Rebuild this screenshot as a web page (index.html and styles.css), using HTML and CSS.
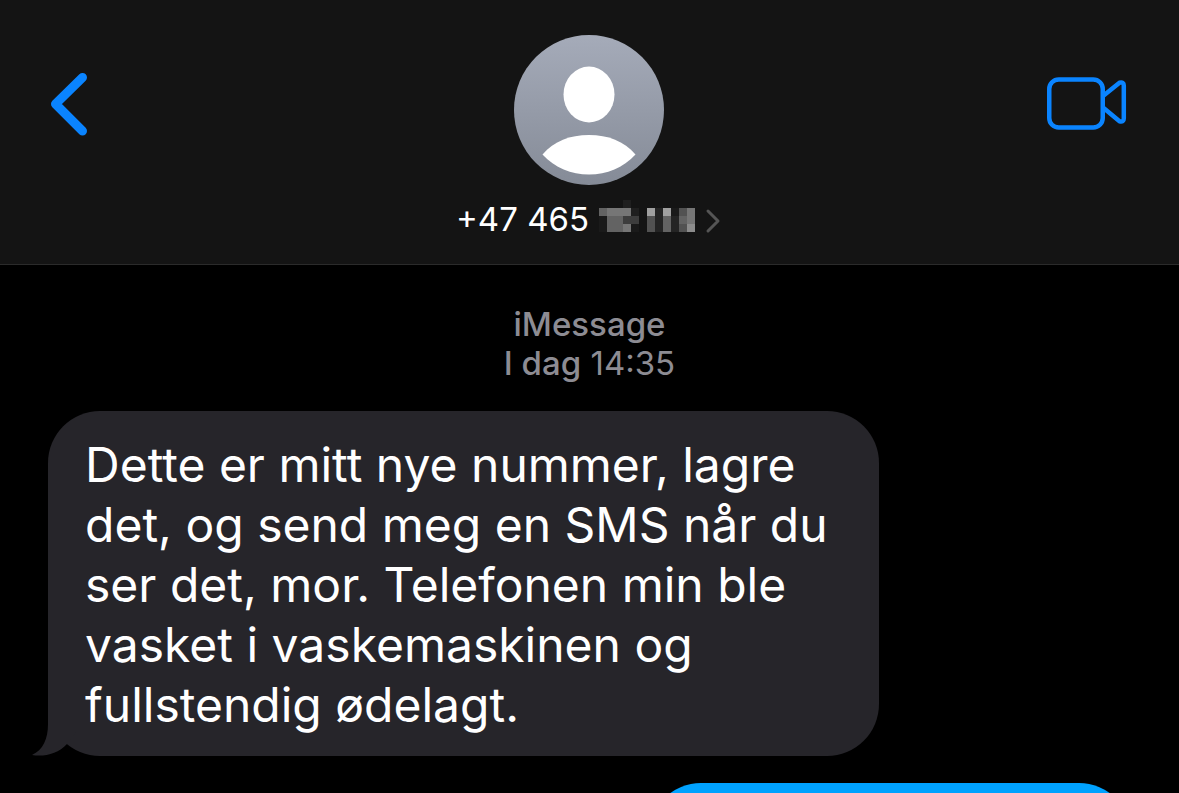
FILE: index.html
```html
<!DOCTYPE html>
<html lang="no">
<head>
    <meta charset="UTF-8">
    <meta name="viewport" content="width=device-width, initial-scale=1.0">
    <title>iMessage</title>
    <link rel="stylesheet" href="styles.css">
</head>
<body>
    <header class="topbar">
        <button class="icon-button" type="button" aria-label="Tilbake">
            <svg width="38" height="64" viewBox="0 0 38 64" fill="none" stroke="#0a84ff" stroke-width="9" stroke-linecap="round" stroke-linejoin="round">
                <path d="M32.500 5.500L5.500 32L32.500 59"/>
            </svg>
        </button>

        <div class="contact">
            <svg width="150" height="150" viewBox="0 0 150 150">
                <defs>
                    <linearGradient id="avatar" x1="0" y1="0" x2="0" y2="1">
                        <stop offset="0" stop-color="#a5abb9"/>
                        <stop offset="1" stop-color="#858b97"/>
                    </linearGradient>
                </defs>
                <circle cx="75" cy="75" r="75" fill="url(#avatar)"/>
                <ellipse cx="75" cy="59.500" rx="25.500" ry="28" fill="#fff"/>
                <path d="M28.500 119.500C40 106 56 100 75 100S110 106 121.500 119.500C109 133 93 139.500 75 139.500S41 133 28.500 119.500Z" fill="#fff"/>
            </svg>
            <a class="number" href="#">
                <span>+47 465</span>
                <svg class="hidden-digits" width="96" height="32" viewBox="0 0 12 4" shape-rendering="crispEdges" aria-hidden="true">
                    <g fill="#1f1f1f"><path d="M3 0h1v1h-1zM4 1h1v1h-1z"/></g>
                    <g fill="#1a1a1a"><path d="M0 2h1v2h-1zM4 3h1v1h-1zM9 1h1v1h-1z"/></g>
                    <g fill="#242424"><path d="M7 1h1v3h-1zM9 2h1v2h-1z"/></g>
                    <g fill="#3d3d3d"><path d="M3 2h2v1h-2z"/></g>
                    <g fill="#525252"><path d="M6 2h1v2h-1zM10 1h1v1h-1zM10 3h1v1h-1z"/></g>
                    <g fill="#636363"><path d="M0 1h1v1h-1zM1 2h2v2h-2zM8 2h1v2h-1zM10 2h1v1h-1z"/></g>
                    <g fill="#767676"><path d="M1 1h3v1h-3zM3 2h0v1h-0zM3 3h1v1h-1zM11 1h1v2h-1z"/></g>
                    <g fill="#8c8c8c"><path d="M11 3h1v1h-1z"/></g>
                    <g fill="#a0a0a0"><path d="M6 1h1v1h-1zM8 1h1v1h-1z"/></g>
                </svg>
                <svg class="chevron" width="16" height="26" viewBox="0 0 16 26" fill="none" stroke="#555" stroke-width="3" stroke-linecap="round" stroke-linejoin="round">
                    <path d="M3 3L13 13L3 23"/>
                </svg>
            </a>
        </div>

        <button class="icon-button" type="button" aria-label="Videosamtale">
            <svg width="80" height="54" viewBox="0 0 80 54" fill="none" stroke="#0a84ff" stroke-width="4.500" stroke-linejoin="round">
                <rect x="2.250" y="2.500" width="53.500" height="48" rx="9.500"/>
                <path d="M56 19L72.500 5.700Q76.800 4.500 76.800 8.500V41.500Q76.800 45.500 72.500 44.300L56 30.500"/>
            </svg>
        </button>
    </header>

    <main class="thread">
        <p class="stamp"><b>iMessage</b><br><b>I dag</b> 14:35</p>
        <div class="bubble received">
            Dette er mitt nye nummer, lagre<br>
            det, og send meg en SMS når du<br>
            ser det, mor. Telefonen min ble<br>
            vasket i vaskemaskinen og<br>
            fullstendig ødelagt.
            <svg class="tail" width="44" height="60" viewBox="0 0 44 60" fill="#26252a">
                <path d="M16 0V28C16 43 11 54 0 59C12 61 26 58 35 48L44 36V0Z"/>
            </svg>
        </div>
        <div class="bubble sent"></div>
    </main>
</body>
</html>
```
FILE: styles.css
```css
* { box-sizing: border-box; }
body {
    margin: 0;
    height: 100vh;
    overflow: hidden;
    background: #000;
    color: #fff;
    font-family: Inter, "Liberation Sans", sans-serif;
}
svg { display: block; }

.topbar {
    display: flex;
    justify-content: space-between;
    align-items: flex-start;
    padding: 35px 52px 20px 50px;
    background: #141414;
    border-bottom: 1px solid #2b2b2b;
}
.icon-button {
    display: flex;
    flex: 1;
    padding: 37px 0 0;
    border: none;
    background: none;
    cursor: pointer;
}
.icon-button:last-child {
    justify-content: flex-end;
    padding-top: 42px;
}
.contact {
    display: flex;
    flex-direction: column;
    align-items: center;
    gap: 9px;
}
.number {
    display: flex;
    align-items: center;
    gap: 10px;
    color: #fff;
    font-size: 33px;
    line-height: 50px;
    text-decoration: none;
}
.hidden-digits { margin-bottom: 6px; }
.chevron { margin-top: 4px; }

.thread {
    display: flex;
    flex-direction: column;
    padding: 40px 48px;
}
.stamp {
    margin: 0 0 28px;
    color: #8d8c93;
    font-size: 33px;
    line-height: 39px;
    text-align: center;
}
.stamp b { font-weight: 500; }
.bubble {
    position: relative;
    border-radius: 52px;
    padding: 24px 37px 21px;
    font-size: 48px;
    line-height: 60px;
}
.received {
    align-self: flex-start;
    width: 76.7%;
    background: #26252a;
    white-space: nowrap;
}
.tail {
    position: absolute;
    left: -16px;
    bottom: 0;
}
.sent {
    align-self: flex-end;
    width: 44.5%;
    min-height: 105px;
    margin-top: 27px;
    background: #00a2ff;
}
```
